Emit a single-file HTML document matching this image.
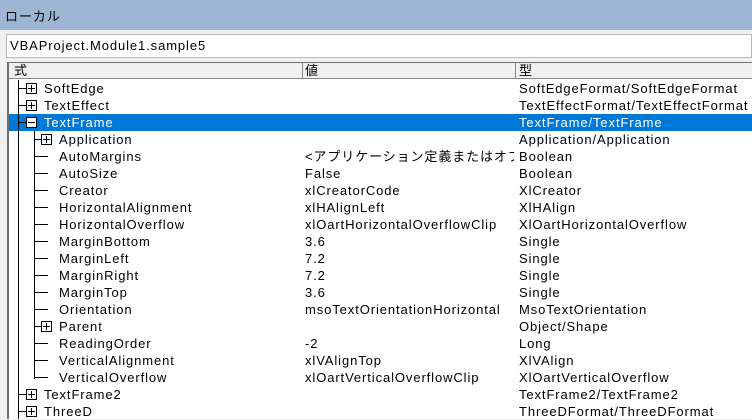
<!DOCTYPE html><html><head><meta charset="utf-8"><style>
*{margin:0;padding:0;box-sizing:border-box}
body{width:752px;height:419px;overflow:hidden;background:#f0f0f0;font-family:"Liberation Sans","Noto Sans CJK JP",sans-serif;font-size:13px;letter-spacing:0.9px;color:#000;position:relative}
.a{position:absolute;white-space:nowrap}
.t{line-height:17px;height:17px}
.box{position:absolute;width:11px;height:11px;border:1px solid #000;background:#fff}
.box:before{content:"";position:absolute;left:1px;top:4px;width:7px;height:1px;background:#000}
.plus:after{content:"";position:absolute;left:4px;top:1px;width:1px;height:7px;background:#000}
.h{position:absolute;height:1px;background:#000}
.v{position:absolute;width:1px;background:#000}
</style></head><body>
<div class="a" style="left:0;top:0;width:752px;height:30px;background:#9eb6d4"></div>
<div class="a" style="left:5px;top:6px;font-size:13px">ローカル</div>
<div class="a" style="left:6px;top:34px;width:746px;height:24px;background:#fff;border:1px solid #b8b8b8"></div>
<div class="a" style="left:10px;top:37px;line-height:17px">VBAProject.Module1.sample5</div>
<div class="a" style="left:7px;top:62px;width:745px;height:357px;background:#fff;border-left:2px solid #707070;border-top:1px solid #707070"></div>
<div class="a" style="left:9px;top:63px;width:743px;height:16px;background:#f0f0f0;border-bottom:1px solid #888"></div>
<div class="a" style="left:302px;top:63px;width:1px;height:16px;background:#888"></div>
<div class="a" style="left:515px;top:63px;width:1px;height:16px;background:#888"></div>
<div class="a t" style="left:14px;top:62px">式</div>
<div class="a t" style="left:305px;top:62px">値</div>
<div class="a t" style="left:519px;top:62px">型</div>
<div class="a" style="left:9px;top:114px;width:743px;height:17px;background:#0078d7"></div>
<div id="rows"></div>
<script>
var R=[
[0,"p","SoftEdge","","SoftEdgeFormat/SoftEdgeFormat"],
[0,"p","TextEffect","","TextEffectFormat/TextEffectFormat"],
[0,"m","TextFrame","","TextFrame/TextFrame"],
[1,"p","Application","","Application/Application"],
[1,"","AutoMargins","<アプリケーション定義またはオブジ","Boolean"],
[1,"","AutoSize","False","Boolean"],
[1,"","Creator","xlCreatorCode","XlCreator"],
[1,"","HorizontalAlignment","xlHAlignLeft","XlHAlign"],
[1,"","HorizontalOverflow","xlOartHorizontalOverflowClip","XlOartHorizontalOverflow"],
[1,"","MarginBottom","3.6","Single"],
[1,"","MarginLeft","7.2","Single"],
[1,"","MarginRight","7.2","Single"],
[1,"","MarginTop","3.6","Single"],
[1,"","Orientation","msoTextOrientationHorizontal","MsoTextOrientation"],
[1,"p","Parent","","Object/Shape"],
[1,"","ReadingOrder","-2","Long"],
[1,"","VerticalAlignment","xlVAlignTop","XlVAlign"],
[1,"","VerticalOverflow","xlOartVerticalOverflowClip","XlOartVerticalOverflow"],
[0,"p","TextFrame2","","TextFrame2/TextFrame2"],
[0,"p","ThreeD","","ThreeDFormat/ThreeDFormat"]];
var h="";
h+='<div class="v" style="left:18px;top:80px;height:339px"></div>';
h+='<div class="v" style="left:34px;top:131px;height:248px"></div>';
R.forEach(function(r,i){var y=80+i*17,c=y+8,sel=i==2,col=sel?"#fff":"#000";
var lx=r[0]?34:18,bx=r[0]?41:26,tx=r[0]?59:44;
if(r[1]){h+='<div class="h" style="left:'+lx+'px;top:'+c+'px;width:'+(bx-lx)+'px"></div>';
h+='<div class="box '+(r[1]=="p"?"plus":"")+'" style="left:'+bx+'px;top:'+(c-5)+'px"></div>';}
else h+='<div class="h" style="left:'+lx+'px;top:'+c+'px;width:14px"></div>';
h+='<div class="a t" style="left:'+tx+'px;top:'+y+'px;color:'+col+'">'+r[2]+'</div>';
if(r[3])h+='<div class="a t" style="left:305px;top:'+y+'px;width:209px;overflow:hidden">'+r[3].replace("<","&lt;")+'</div>';
h+='<div class="a t" style="left:519px;top:'+y+'px;color:'+col+'">'+r[4]+'</div>';});
document.getElementById("rows").innerHTML=h;
</script>
</body></html>
